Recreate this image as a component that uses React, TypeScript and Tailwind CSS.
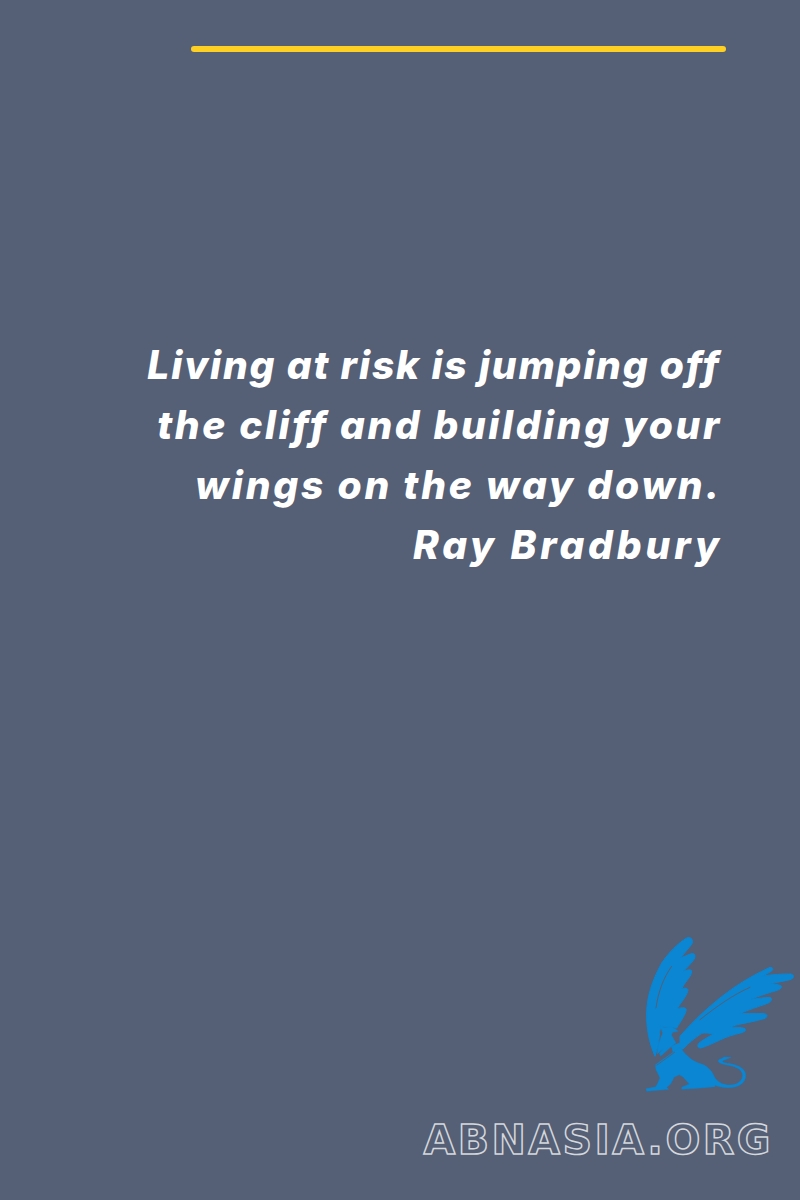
// per-line tracking: the installed font is narrower than the original on some letters
const quoteLines = [
  { text: "Living at risk is jumping off", cls: "tracking-[1.85px] mr-[-2px]" },
  { text: "the cliff and building your", cls: "tracking-[2.6px] mr-[-3px]" },
  { text: "wings on the way down.", cls: "tracking-[2.8px] mr-[-3px]" },
  { text: "Ray Bradbury", cls: "tracking-[3.85px] mr-[-4px]" },
];

const Griffin = () => (
  <svg viewBox="0 0 510 510" className="w-[170px] h-[170px]" fill="#0a86d3" stroke="#0a86d3" strokeWidth="3" strokeLinejoin="round">
    {/* left wing */}
    <path d="M75 385 C58 345 48 300 50 250 C52 205 65 160 95 105 C115 75 145 45 170 30 C180 26 190 32 187 45 C180 58 165 72 152 90 C165 85 178 78 188 76 C197 78 197 88 190 97 C180 110 170 120 160 130 C170 127 180 122 185 128 C187 138 175 152 162 170 L155 183 C163 180 172 178 174 186 C172 200 160 215 148 232 L142 242 C150 240 165 236 169 244 C168 258 152 280 140 300 L100 296 L90 305 L85 350 Z" />
    {/* right wing */}
    <path d="M150 325 C180 290 215 255 260 218 C300 185 350 150 420 118 C431 118 432 126 420 132 L398 144 C425 140 460 137 484 138 C494 142 492 152 480 155 C460 160 440 163 420 167 C435 168 450 170 455 175 C455 184 440 188 425 192 C405 198 385 205 362 214 C380 212 405 208 420 208 C428 212 425 222 410 227 C385 236 355 246 328 257 C355 256 385 256 404 257 C414 260 414 268 402 272 C375 280 345 285 318 291 L300 297 C315 298 335 298 344 301 C350 306 345 312 332 315 C310 320 290 326 270 336 C250 345 230 355 212 360 C203 360 200 352 208 344 C222 334 236 326 250 318 C238 316 225 313 215 316 C195 330 175 345 160 362 L130 372 L125 355 L150 345 Z" />
    {/* wing streaks */}
    <path d="M125 115 C100 150 85 190 78 240" fill="none" stroke="#555f75" strokeWidth="3" strokeLinecap="round" />
    <path d="M360 178 C310 200 260 235 210 275" fill="none" stroke="#555f75" strokeWidth="3" strokeLinecap="round" />
    {/* head and neck */}
    <path d="M90 294 L105 299 C115 295 130 295 145 310 L128 313 L125 322 L138 345 L125 355 L92 385 L88 376 L100 362 L82 378 C82 350 92 330 98 315 Z" strokeWidth="1" />
    {/* body */}
    <path d="M76 410 L150 358 C165 378 180 395 205 405 C228 410 245 425 255 450 C268 468 295 476 318 468 C340 458 344 438 328 424 C312 412 285 412 272 406 C262 402 262 394 274 392 L282 387 L304 388 L284 396 C276 398 276 402 284 404 C308 408 335 412 345 432 C352 452 340 470 318 476 C295 482 270 478 255 472 L255 476 L205 481 L155 484 L155 478 L178 468 L160 448 L148 440 L132 448 L122 468 L110 478 L116 484 L50 490 L48 482 L78 476 L90 450 L78 425 Z" strokeWidth="1" />
    <path d="M80 412 L135 372" fill="none" stroke="#555f75" strokeWidth="2.5" />
  </svg>
);

export default function App() {
  return (
    <div className="w-[800px] h-[1200px] overflow-hidden bg-[#555f75] flex flex-col">
      <div className="ml-[191px] mt-[46px] w-[535px] h-[6px] rounded-full bg-[#fdd023]" />

      <div className="mt-[283px] mr-[81px] text-right text-white text-[39px] leading-[60px] font-extrabold italic whitespace-nowrap [font-family:Inter,'Liberation_Sans',sans-serif]">
        {quoteLines.map((line) => (
          <div key={line.text} className={line.cls}>
            {line.text}
          </div>
        ))}
      </div>

      <div className="mt-auto flex flex-col items-end pr-[27px] pb-[38px]">
        <div className="mr-[-27px] mb-[20px]">
          <Griffin />
        </div>
        <div className="text-transparent text-[41px] leading-[44px] font-bold whitespace-nowrap tracking-[2.5px] [font-family:'DejaVu_Sans',sans-serif] [-webkit-text-stroke:1.5px_#d4d7dc]">
          ABNASIA.ORG
        </div>
      </div>
    </div>
  );
}
